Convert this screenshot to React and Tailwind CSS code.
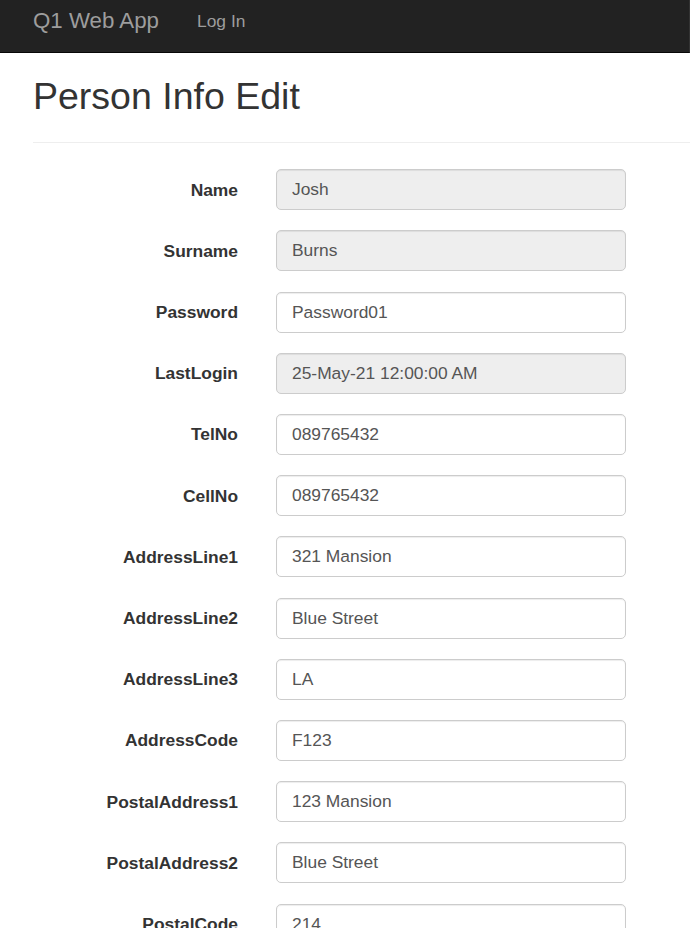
const FIELDS = [
  { label: 'Name', value: 'Josh', disabled: true },
  { label: 'Surname', value: 'Burns', disabled: true },
  { label: 'Password', value: 'Password01' },
  { label: 'LastLogin', value: '25-May-21 12:00:00 AM', disabled: true },
  { label: 'TelNo', value: '089765432' },
  { label: 'CellNo', value: '089765432' },
  { label: 'AddressLine1', value: '321 Mansion' },
  { label: 'AddressLine2', value: 'Blue Street' },
  { label: 'AddressLine3', value: 'LA' },
  { label: 'AddressCode', value: 'F123' },
  { label: 'PostalAddress1', value: '123 Mansion' },
  { label: 'PostalAddress2', value: 'Blue Street' },
  { label: 'PostalCode', value: '214' },
]

const FormRow = ({ label, value, disabled }) => (
  <div className="flex items-center">
    <label className="w-[205px] shrink-0 text-right text-[17.4px] font-bold text-[#333]">
      {label}
    </label>
    <input
      type="text"
      readOnly
      value={value}
      disabled={disabled}
      className={`ml-[38px] h-[41px] w-[350px] shrink-0 rounded-[5px] border border-[#ccc] px-[15px] text-[17.4px] text-[#555] shadow-[inset_0_1px_1px_rgba(0,0,0,0.075)] outline-none ${
        disabled ? 'bg-[#eee]' : 'bg-white'
      }`}
    />
  </div>
)

const App = () => {
  return (
    <div className="min-h-[928px] overflow-hidden bg-white font-['Liberation_Sans',Arial,sans-serif]">
      {/* Navbar */}
      <nav className="flex h-[53px] items-start border-b border-r border-[#080808] border-r-[#333] bg-[#222] pl-[33px] pt-[8px]">
        <span className="text-[22.3px] leading-[26px] text-[#9d9d9d]">Q1 Web App</span>
        <span className="ml-[38px] pt-[2px] text-[17.4px] leading-[22px] text-[#9d9d9d]">Log In</span>
      </nav>

      {/* Page header */}
      <h2 className="ml-[33px] mt-[23px] text-[37.5px] leading-[1.1] font-normal text-[#333]">
        Person Info Edit
      </h2>
      <hr className="ml-[33px] mt-[25px] border-t border-[#eee]" />

      {/* Form */}
      <div className="ml-[33px] mt-[26px] flex flex-col gap-[20.2px]">
        {FIELDS.map((f) => (
          <FormRow key={f.label} {...f} />
        ))}
      </div>
    </div>
  )
}

export default App
